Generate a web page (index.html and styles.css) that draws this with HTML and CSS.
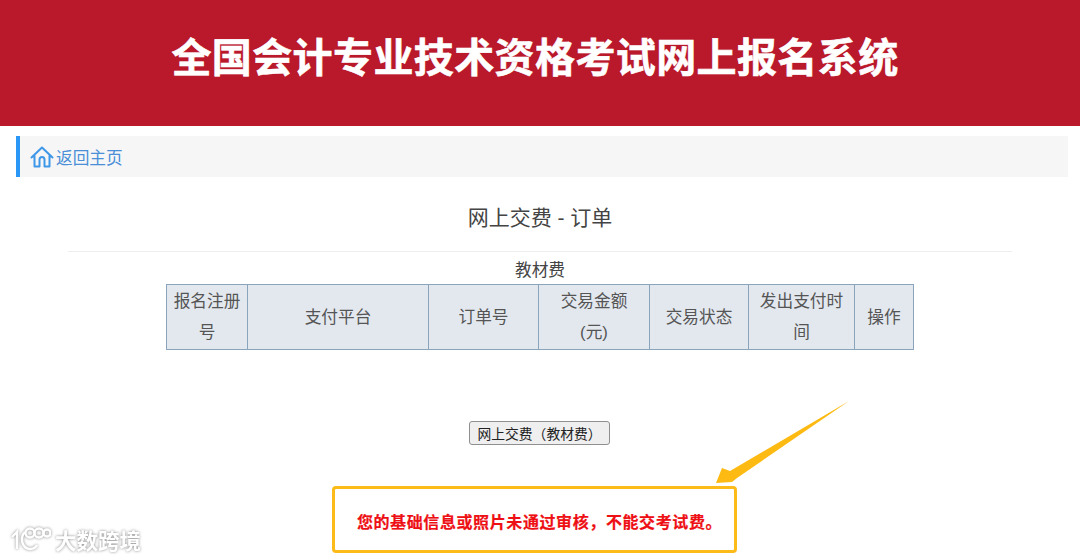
FILE: index.html
```html
<!DOCTYPE html>
<html lang="zh">
<head>
<meta charset="utf-8">
<title>全国会计专业技术资格考试网上报名系统</title>
<link rel="stylesheet" href="styles.css">
</head>
<body>
<header class="banner"><h1>全国会计专业技术资格考试网上报名系统</h1></header>
<nav class="crumb">
  <a class="home" href="#">
    <svg class="home-icon" viewBox="0 0 24 24" width="24" height="24" aria-hidden="true"><path d="M1.500 12.500 12 2.500l10.500 10M4.500 10.500V21.500h5V14.500a2.500 2.500 0 0 1 5 0V21.500h5V10.500" fill="none" stroke="#3f97e8" stroke-width="2" stroke-linejoin="round" stroke-linecap="round"/></svg>
    <span>返回主页</span>
  </a>
</nav>
<main class="content">
  <h2 class="page-title">网上交费 - 订单</h2>
  <div class="rule"></div>
  <table class="orders">
    <caption>教材费</caption>
    <thead>
      <tr>
        <th class="c1">报名注册号</th>
        <th class="c2">支付平台</th>
        <th class="c3">订单号</th>
        <th class="c4">交易金额<br>(元)</th>
        <th class="c5">交易状态</th>
        <th class="c6">发出支付时间</th>
        <th class="c7">操作</th>
      </tr>
    </thead>
  </table>
  <div class="actions"><button class="pay" type="button">网上交费（教材费）</button></div>
  <div class="notice">您的基础信息或照片未通过审核，不能交考试费。</div>
</main>
<svg class="arrow" viewBox="0 0 140 90" width="140" height="90" aria-hidden="true"><path d="M135 1 23 78l-5 4-16 1 6-15 8 3Z" fill="#fdba12"/></svg>
<div class="watermark">
  <svg viewBox="0 0 42 30" width="42" height="30" aria-hidden="true"><g fill="none" stroke="#fff" stroke-width="2.400"><path d="M3 12 8 7v17M16 7c-5 5-4 16 5 17 3 0 6-2 7-4"/><circle cx="21" cy="8" r="4.500"/><circle cx="30" cy="8" r="4.500"/><circle cx="38" cy="8" r="3.500"/></g></svg>
  <span>大数跨境</span>
</div>
</body>
</html>
```
FILE: styles.css
```css
* { box-sizing: border-box; }
html, body { margin: 0; padding: 0; }
body {
  width: 1080px;
  height: 559px;
  overflow: hidden;
  position: relative;
  background: #fff;
  color: #444;
  font-family: "Liberation Sans", "Noto Sans CJK SC", sans-serif;
  font-size: 16px;
}
.banner {
  height: 126px;
  background: #b9192b;
  display: flex;
  align-items: center;
  justify-content: center;
}
.banner h1 {
  margin: 0 10px 10px 0;
  color: #fff;
  font-size: 40px;
  font-weight: 700;
  letter-spacing: 0.4px;
  line-height: 1.2;
  -webkit-text-stroke: 0.6px #fff;
}
.crumb {
  margin: 10px 12px 0 16px;
  height: 41px;
  background: #f6f6f6;
  border-left: 4px solid #2a96f5;
  display: flex;
  align-items: center;
  padding-left: 10px;
}
.home {
  display: flex;
  align-items: center;
  gap: 2px;
  color: #4a8fd8;
  text-decoration: none;
  font-size: 16.700px;
}
.content { display: flex; flex-direction: column; align-items: center; }
.page-title {
  margin: 27px 0 0;
  font-size: 21px;
  font-weight: 400;
  line-height: 28px;
  color: #444;
}
.rule {
  width: 944px;
  height: 1px;
  margin-top: 19px;
  background: #eeeeee;
}
.orders {
  width: 747px;
  table-layout: fixed;
  border-collapse: collapse;
  margin-top: 6px;
}
.orders caption {
  line-height: 26px;
  height: 26px;
  color: #444;
  font-size: 16.700px;
}
.orders th {
  background: #e3e8ef;
  border: 1px solid #8aa5bb;
  font-weight: 400;
  font-size: 16.700px;
  line-height: 31px;
  padding: 1px 5px 1px;
  color: #555;
  text-align: center;
}
.c1 { width: 81px; }
.c2 { width: 181px; }
.c3 { width: 110px; }
.c4 { width: 111px; }
.c5 { width: 99px; }
.c6 { width: 106px; }
.c7 { width: 59px; }
.actions { margin: 71px 1px 0 0; }
.pay {
  width: 141px;
  height: 24px;
  padding: 0;
  background: #efefef;
  border: 1px solid #8f8f8f;
  border-radius: 3px;
  font-family: inherit;
  font-size: 13.800px;
  color: #222;
}
.notice {
  width: 405px;
  height: 67px;
  margin-top: 41px;
  margin-left: -11px;
  padding: 2px 0 0 10px;
  border: 3px solid #fdbb1a;
  border-radius: 4px;
  display: flex;
  align-items: center;
  justify-content: center;
  color: #ee0f14;
  font-size: 16px;
  font-weight: 700;
  letter-spacing: 0.600px;
  -webkit-text-stroke: 0.2px #ee0f14;
}
.arrow { position: absolute; left: 714px; top: 400px; }
.watermark {
  position: absolute;
  left: 9px;
  top: 524px;
  display: flex;
  align-items: center;
  gap: 4px;
  color: #fff;
  font-size: 21.500px;
  font-weight: 700;
  filter: drop-shadow(0 0 1.500px #8a8a8a);
}
```
